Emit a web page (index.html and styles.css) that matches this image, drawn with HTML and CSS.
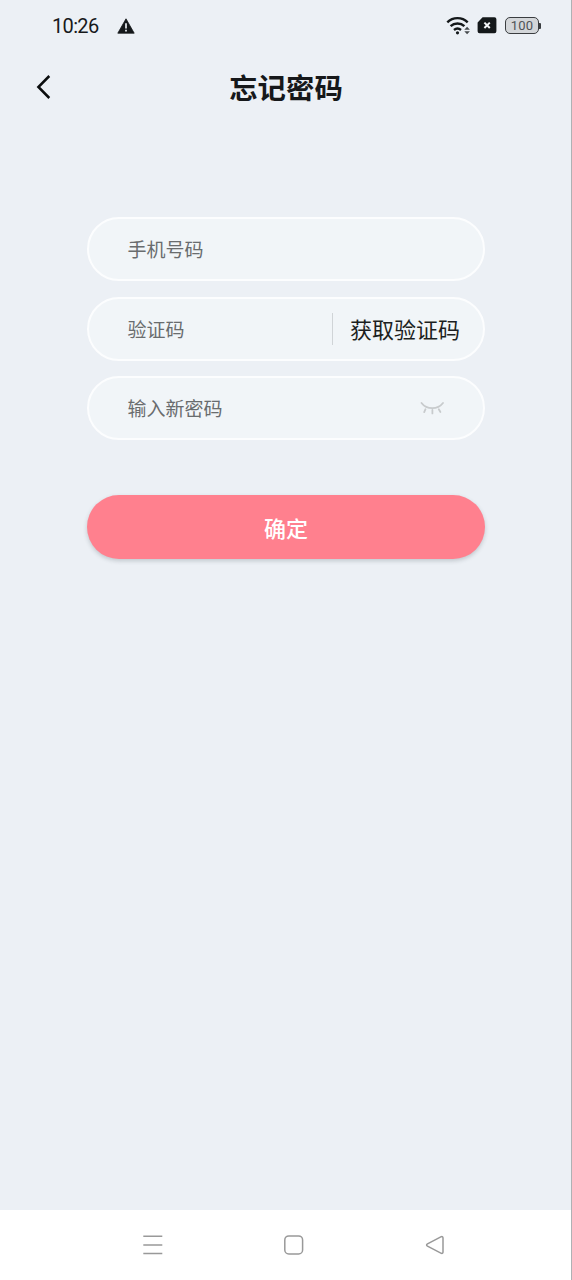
FILE: index.html
```html
<!DOCTYPE html>
<html lang="zh-CN">
<head>
<meta charset="utf-8">
<title>忘记密码</title>
<link rel="stylesheet" href="styles.css">
</head>
<body>
<div class="screen">
  <div class="status-bar">
    <span class="clock">10:26</span>
    <svg class="warning" width="18" height="16" viewBox="0 0 18 16"><path d="M9 .8 17.2 15.2H.8Z" fill="#14181a" stroke="#14181a" stroke-width=".8" stroke-linejoin="round"/><path d="M9 5.2v5.2M9 11.7v1.8" stroke="#ebeff4" stroke-width="1.7"/></svg>
    <div class="indicators">
      <svg width="25" height="20" viewBox="0 0 25 20" fill="none" stroke="#14181a" stroke-width="2.4"><path d="M1.3 6.3a14.6 14.6 0 0 1 20.4 0M4.6 10.2a10 10 0 0 1 13.8 0M8 14a5.4 5.4 0 0 1 7 0"/><circle cx="11.5" cy="16.8" r="1.6" fill="#14181a" stroke="none"/><path d="m18.3 13.8 2.8-3 2.8 3zM18.3 15.3l2.8 3 2.8-3z" fill="#454a4d" stroke="none"/></svg>
      <svg class="sim" width="20" height="17" viewBox="0 0 20 17"><path d="M5.6.3H17.4a2 2 0 0 1 2 2v12a2 2 0 0 1-2 2H2.6a2 2 0 0 1-2-2V5.4Z" fill="#14181a"/><path d="m7.4 5.6 5.4 5.4m0-5.4L7.4 11" stroke="#f4f6f8" stroke-width="2"/></svg>
      <span class="battery">100</span>
    </div>
  </div>
  <header class="title-bar">
    <svg class="back" width="16" height="26" viewBox="0 0 16 26"><path d="M14.3 2 3.4 13l10.9 11" fill="none" stroke="#0b0d0e" stroke-width="2.5"/></svg>
    <h1 class="title">忘记密码</h1>
  </header>
  <main class="form">
    <div class="field"><span class="placeholder">手机号码</span></div>
    <div class="field"><span class="placeholder">验证码</span><span class="get-code">获取验证码</span></div>
    <div class="field"><span class="placeholder">输入新密码</span>
      <svg class="eye" width="26" height="16" viewBox="0 0 26 16" fill="none" stroke="#c8cbcd" stroke-width="1.8" stroke-linecap="round"><path d="M2.5 3c5.3 6.9 16.2 6.9 21.5 0M6.5 9.2l-1.3 2.9M13.4 10v3.4M19.8 9.2l1.6 2.8"/></svg>
    </div>
    <button class="submit">确定</button>
  </main>
  <nav class="nav-bar">
    <svg width="24" height="24" viewBox="0 0 24 24"><path d="M2.3 3.3h19M2.3 12h19M2.3 20.6h19"/></svg>
    <svg width="24" height="24" viewBox="0 0 24 24"><rect x="2.8" y="2.9" width="17.8" height="18" rx="4"/></svg>
    <svg width="24" height="24" viewBox="0 0 24 24"><path d="M18.3 3.7 4.5 10.8q-1.8 1.2 0 2.4l13.8 7.1q1.7.4 1.7-1.2V4.9q0-1.6-1.7-1.2Z"/></svg>
  </nav>
</div>
</body>
</html>
```
FILE: styles.css
```css
* { box-sizing: border-box; }
body {
  margin: 0;
  font-family: "Noto Sans CJK SC", sans-serif;
}
.screen {
  display: flex;
  flex-direction: column;
  width: 572px;
  height: 1280px;
  background: #ecf0f5;
  border-right: 1px solid #aeb1b4;
}
svg { display: block; flex: none; }
.status-bar {
  display: flex;
  align-items: center;
  height: 51px;
  padding: 0 30px 0 52px;
}
.clock {
  width: 65px;
  font: 20px/24px Roboto, sans-serif;
  letter-spacing: -0.65px;
  color: #17191b;
}
.indicators {
  display: flex;
  align-items: center;
  margin-left: auto;
}
.sim { margin: 0 8px 0 6px; }
.battery {
  position: relative;
  width: 34px;
  height: 17px;
  border: 1.5px solid #3a3d40;
  border-radius: 5px;
  background: #d3d6d9;
  font: 13px/15px Roboto, sans-serif;
  letter-spacing: 0.2px;
  text-align: center;
  color: #505356;
  margin-right: 2px;
}
.battery::after {
  content: "";
  position: absolute;
  right: -3px;
  top: 5px;
  width: 2px;
  height: 6px;
  background: #3a3d40;
  border-radius: 0 1px 1px 0;
}
.title-bar {
  display: grid;
  grid-template-columns: 36px 1fr 36px;
  align-items: center;
  height: 72px;
  padding: 0 34px 0 35px;
}
.title {
  margin: 0;
  font-size: 28.4px;
  font-weight: 700;
  line-height: 40px;
  text-align: center;
  color: #16181a;
}
.form {
  flex: 1;
  display: flex;
  flex-direction: column;
  gap: 15.5px;
  padding: 94px 86px 0 87px;
}
.field {
  display: flex;
  align-items: center;
  height: 64px;
  padding: 0 23px 0 38.5px;
  background: #f1f5f8;
  border: 2px solid #fcfdfe;
  border-radius: 32px;
}
.placeholder {
  flex: 1;
  font-size: 19px;
  line-height: 28px;
  color: #696c6e;
}
.get-code {
  border-left: 1px solid #d0d4d7;
  padding: 0 0 2px 17px;
  font-size: 22px;
  line-height: 30px;
  color: #1c1f21;
}
.eye { margin-right: 15px; }
.submit {
  height: 64px;
  margin-top: 39.5px;
  padding: 0 0 1px;
  border: 0;
  border-radius: 32px;
  background: #ff808e;
  box-shadow: 0 2px 4px rgba(60, 70, 80, 0.24);
  font: 500 22px/32px "Noto Sans CJK SC", sans-serif;
  color: #fff;
}
.nav-bar {
  display: flex;
  justify-content: space-between;
  align-items: center;
  height: 70px;
  padding: 0 124px 0 141px;
  background: #fff;
  fill: none;
  stroke: #999;
  stroke-width: 1.5;
}
```
